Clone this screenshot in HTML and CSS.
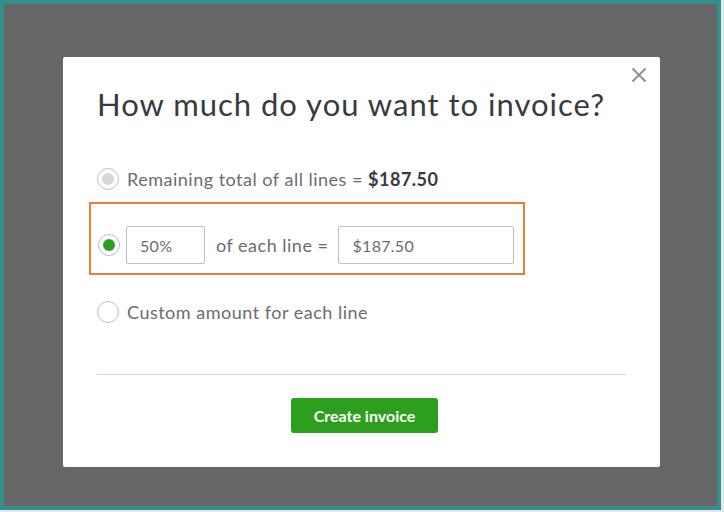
FILE: index.html
```html
<!DOCTYPE html>
<html>
<head>
<meta charset="utf-8">
<link rel="stylesheet" href="styles.css">
</head>
<body>
<div class="frame">
  <div class="overlay">
    <div class="modal">
      <button class="close" aria-label="Close">
        <svg width="16" height="16" viewBox="0 0 16 16"><path d="M1.5 1.5 L14.5 14.5 M14.5 1.5 L1.5 14.5" stroke="#8d9096" stroke-width="2" fill="none"/></svg>
      </button>
      <h1 class="title">How much do you want to invoice?</h1>
      <div class="options">
        <label class="option">
          <span class="radio radio-disabled"><span class="dot dot-grey"></span></span>
          <span class="opt-text">Remaining total of all lines = <b>$187.50</b></span>
        </label>
        <div class="highlight">
          <label class="option">
            <span class="radio"><span class="dot dot-green"></span></span>
            <span class="field field-pct">50%</span>
            <span class="opt-text">of each line =</span>
            <span class="field field-amt">$187.50</span>
          </label>
        </div>
        <label class="option option-last">
          <span class="radio"></span>
          <span class="opt-text">Custom amount for each line</span>
        </label>
      </div>
      <hr class="divider">
      <div class="actions">
        <button class="btn-primary">Create invoice</button>
      </div>
    </div>
  </div>
</div>
</body>
</html>
```
FILE: styles.css
```css
* { box-sizing: border-box; }
html, body { margin: 0; padding: 0; }
body {
  background: #e6e8e8;
  width: 724px;
  height: 512px;
  overflow: hidden;
  font-family: "Lato", "Open Sans", sans-serif;
}
.frame {
  width: 721px;
  height: 510px;
  background: #34908c;
  padding: 4px 4px 4px 4px;
}
.overlay {
  width: 713px;
  height: 502px;
  background: #666666;
  padding: 53px 0 0 59px;
}
.modal {
  position: relative;
  width: 597px;
  height: 410px;
  background: #ffffff;
  border-radius: 2px;
  padding: 0 34px;
}
.close {
  position: absolute;
  top: 10px;
  right: 13px;
  border: 0;
  background: none;
  padding: 0;
  width: 16px;
  height: 16px;
  cursor: pointer;
}
.close svg { display: block; }
.title {
  margin: 0;
  padding-top: 29px;
  font-size: 31px;
  line-height: 36px;
  font-weight: 400;
  color: #393a3d;
  letter-spacing: 1px;
}
.options {
  margin-top: 45px;
  display: flex;
  flex-direction: column;
}
.option {
  display: flex;
  align-items: center;
  height: 24px;
}
.radio {
  width: 22px;
  height: 22px;
  border: 1px solid #babec5;
  border-radius: 50%;
  background: #fff;
  display: flex;
  align-items: center;
  justify-content: center;
  flex: none;
}
.dot { width: 12px; height: 12px; border-radius: 50%; }
.dot-grey { background: #d4d7dc; }
.dot-green { background: #2ca01c; }
.opt-text {
  margin-left: 8px;
  font-size: 18px;
  letter-spacing: 0.5px;
  color: #6b6c72;
}
.opt-text b { color: #393a3d; font-weight: 700; }
.highlight {
  margin: 11px 0 0 -8px;
  width: 436px;
  height: 73px;
  border: 2px solid #ef7d31;
  padding: 22px 0 0 7px;
  display: flex;
  align-items: flex-start;
}
.highlight .option { height: 38px; }
.field {
  height: 38px;
  border: 1px solid #babec5;
  border-radius: 2px;
  display: flex;
  align-items: center;
  font-size: 16px;
  letter-spacing: 0.3px;
  color: #6b6c72;
  padding-left: 13px;
}
.field-pct { width: 79px; margin-left: 6px; }
.highlight .opt-text { margin-left: 11px; margin-right: 10px; }
.field-amt { width: 176px; }
.option-last { margin-top: 25px; }
.divider {
  margin: 50px 0 0 0;
  border: 0;
  border-top: 1px solid #d4d7dc;
}
.actions {
  display: flex;
  justify-content: center;
  margin-top: 23px;
  padding-left: 6px;
}
.btn-primary {
  width: 147px;
  height: 35px;
  border: 0;
  border-radius: 3px;
  background: #2ca01c;
  color: #fff;
  font-family: "Lato", sans-serif;
  font-size: 16px;
  font-weight: 700;
  cursor: pointer;
}
```
